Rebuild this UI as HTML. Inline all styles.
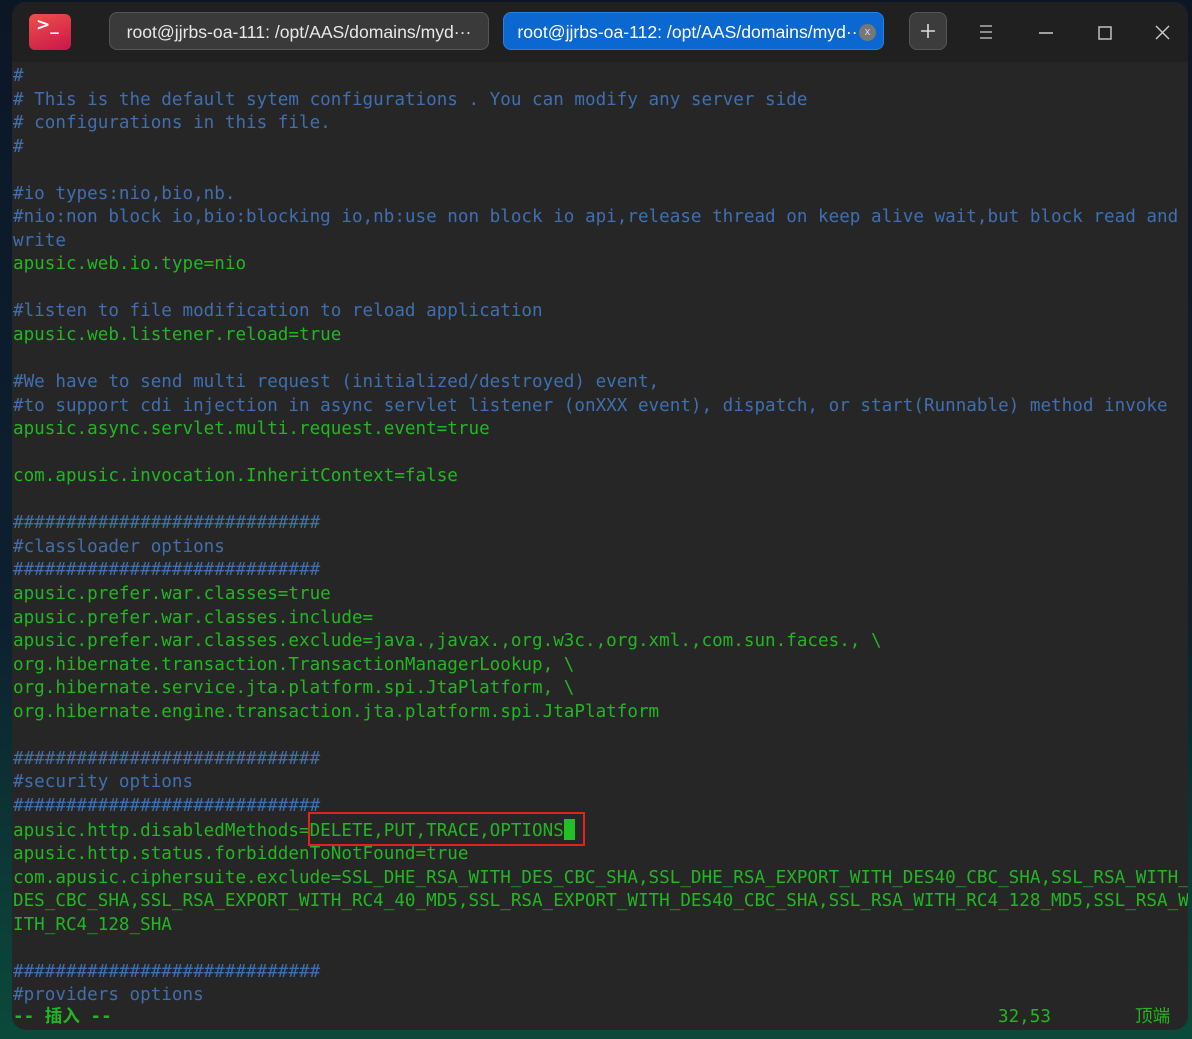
<!DOCTYPE html>
<html><head><meta charset="utf-8">
<style>
html,body{margin:0;padding:0;}
body{width:1192px;height:1039px;overflow:hidden;position:relative;
background:linear-gradient(180deg,#0c1726 0%,#0d2030 60%,#0b4a3a 100%);}
.win{position:absolute;left:12px;top:2px;width:1176px;height:1028px;background:#262626;border-radius:14px;overflow:hidden;}
.tb{position:absolute;left:0;top:0;width:100%;height:60px;background:#202020;}
.icon{position:absolute;left:17px;top:12px;width:42px;height:36px;border-radius:6px;background:linear-gradient(160deg,#f0504a,#c8164a);}
.icon span{position:absolute;left:7px;top:1px;color:#fff;font:bold 17px "DejaVu Sans",sans-serif;}
.tab{position:absolute;top:10px;height:38px;border-radius:8px;box-sizing:border-box;color:#e8e8e8;font:17.6px "Liberation Sans","DejaVu Sans",sans-serif;line-height:38px;text-align:center;white-space:nowrap;}
.t1{left:97px;width:380px;background:#3a3a3a;border:1px solid #555;}
.t2{left:491px;width:381px;background:#0a68d0;border:1px solid #2b7fe0;color:#fff;}
.x{position:absolute;left:355px;top:11px;width:17px;height:17px;border-radius:50%;background:#777;color:#ddd;font:11px sans-serif;line-height:16px;text-align:center;}
.plus{position:absolute;left:897px;top:10px;width:38px;height:38px;border-radius:8px;background:#3c3c3c;border:1px solid #555;box-sizing:border-box;}
.txt{position:absolute;left:1px;top:63px;font-family:"DejaVu Sans Mono","Noto Sans CJK SC",monospace;font-size:17.6px;line-height:23.55px;white-space:pre;color:#22b722;}
.c{color:#3f6fb0;}
.st{position:absolute;top:1004px;font-family:"DejaVu Sans Mono","Noto Sans CJK SC",monospace;font-size:17.6px;line-height:23.55px;color:#22b722;white-space:pre;}
.box{position:absolute;left:296px;top:810px;width:277px;height:34px;border:2px solid #e8201c;box-sizing:border-box;}
.cur{display:inline-block;width:11px;height:21px;background:#22c022;vertical-align:-4px;}
</style></head><body>
<div class="win">
 <div class="tb">
  <div class="icon"><span>&gt;_</span></div>
  <div class="tab t1">root@jjrbs-oa-111: /opt/AAS/domains/myd···</div>
  <div class="tab t2"><span style="position:relative;left:-6px">root@jjrbs-oa-112: /opt/AAS/domains/myd··</span><div class="x">x</div></div>
  <div class="plus"><svg width="38" height="38" style="position:absolute;left:-1px;top:-1px"><path d="M19 12v14M12 19h14" stroke="#ddd" stroke-width="1.6"/></svg></div>
  <svg width="1176" height="60" style="position:absolute;left:0;top:0">
   <path d="M968 24h12M968 30h12M968 36h12" stroke="#ccc" stroke-width="1.3" fill="none"/>
   <path d="M1027 31h14" stroke="#ccc" stroke-width="1.4"/>
   <rect x="1087" y="25" width="12" height="12" stroke="#ccc" stroke-width="1.4" fill="none"/>
   <path d="M1144 24l13 13M1157 24l-13 13" stroke="#ccc" stroke-width="1.4"/>
  </svg>
 </div>
 <div class="txt"><span class="c">#
# This is the default sytem configurations . You can modify any server side
# configurations in this file.
#

#io types:nio,bio,nb.
#nio:non block io,bio:blocking io,nb:use non block io api,release thread on keep alive wait,but block read and
write</span>
apusic.web.io.type=nio

<span class="c">#listen to file modification to reload application</span>
apusic.web.listener.reload=true

<span class="c">#We have to send multi request (initialized/destroyed) event,
#to support cdi injection in async servlet listener (onXXX event), dispatch, or start(Runnable) method invoke</span>
apusic.async.servlet.multi.request.event=true

com.apusic.invocation.InheritContext=false

<span class="c">#############################
#classloader options
#############################</span>
apusic.prefer.war.classes=true
apusic.prefer.war.classes.include=
apusic.prefer.war.classes.exclude=java.,javax.,org.w3c.,org.xml.,com.sun.faces., \
org.hibernate.transaction.TransactionManagerLookup, \
org.hibernate.service.jta.platform.spi.JtaPlatform, \
org.hibernate.engine.transaction.jta.platform.spi.JtaPlatform

<span class="c">#############################
#security options
#############################</span>
apusic.http.disabledMethods=DELETE,PUT,TRACE,OPTIONS<span class="cur"></span>
apusic.http.status.forbiddenToNotFound=true
com.apusic.ciphersuite.exclude=SSL_DHE_RSA_WITH_DES_CBC_SHA,SSL_DHE_RSA_EXPORT_WITH_DES40_CBC_SHA,SSL_RSA_WITH_
DES_CBC_SHA,SSL_RSA_EXPORT_WITH_RC4_40_MD5,SSL_RSA_EXPORT_WITH_DES40_CBC_SHA,SSL_RSA_WITH_RC4_128_MD5,SSL_RSA_W
ITH_RC4_128_SHA

<span class="c">#############################
#providers options</span></div>
 <div class="st" style="left:1px"><b>-- 插入 --</b></div>
 <div class="st" style="left:986px">32,53</div>
 <div class="st" style="left:1123px">顶端</div>
 <div class="box"></div>
</div>
</body></html>
